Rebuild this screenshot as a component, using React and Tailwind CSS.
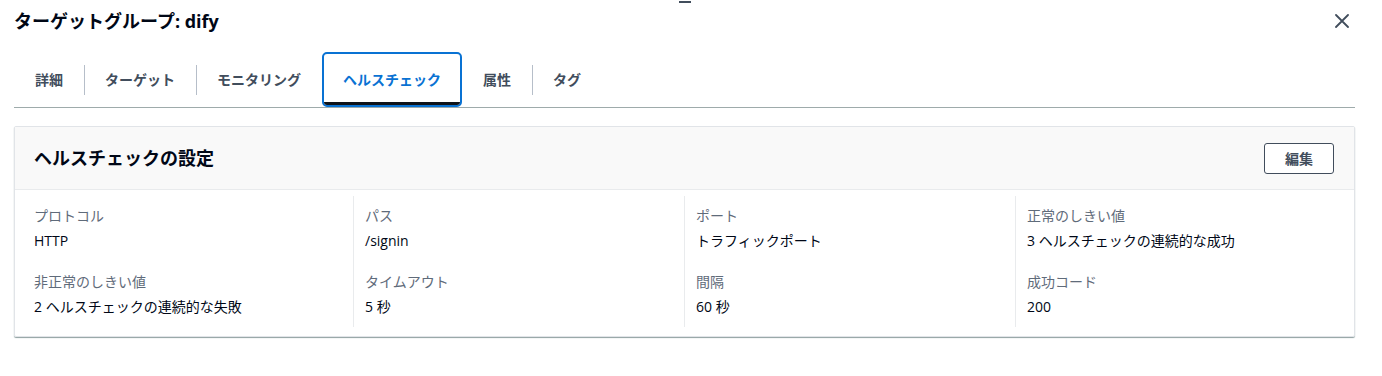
import React from "react";

const tabs = ["詳細", "ターゲット", "モニタリング", "ヘルスチェック", "属性", "タグ"];
const activeTab = 3;

const rows = [
  [
    { label: "プロトコル", value: "HTTP" },
    { label: "非正常のしきい値", value: "2 ヘルスチェックの連続的な失敗" },
  ],
  [
    { label: "パス", value: "/signin" },
    { label: "タイムアウト", value: "5 秒" },
  ],
  [
    { label: "ポート", value: "トラフィックポート" },
    { label: "間隔", value: "60 秒" },
  ],
  [
    { label: "正常のしきい値", value: "3 ヘルスチェックの連続的な成功" },
    { label: "成功コード", value: "200" },
  ],
];

const TabBar = () => (
  <div className="mt-[10px] flex h-[56px] border-b border-[#9eabab]">
    {tabs.map((tab, i) => {
      const active = i === activeTab;
      const showSep = i > 0 && i !== activeTab && i - 1 !== activeTab;
      return (
        <div key={tab} className="relative flex h-[55px] items-center px-[21px]">
          {showSep && (
            <span className="absolute left-0 top-[13px] h-[30px] w-px bg-[#b6bec9]" />
          )}
          {active && (
            <span className="absolute inset-0 overflow-hidden rounded-[5px] border-2 border-[#0972d3]">
              <span className="absolute bottom-0 left-0 right-0 h-[3px] bg-[#0f141a]" />
            </span>
          )}
          <span
            className={
              "relative text-[14px] font-bold leading-[20px] " +
              (active ? "text-[#0972d3]" : "text-[#414d5c]")
            }
          >
            {tab}
          </span>
        </div>
      );
    })}
  </div>
);

const Field = ({ label, value, className = "" }) => (
  <div className={className}>
    <div className="text-[14px] leading-[22px] text-[#5f6b7a]">{label}</div>
    <div className="mt-[3px] text-[14px] leading-[22px] text-[#000716]">{value}</div>
  </div>
);

export default function App() {
  return (
    <div className="relative h-[376px] w-[1382px] bg-white pl-[14px] pr-[27px] font-['Open_Sans','Noto_Sans_CJK_JP',sans-serif]">
      {/* stray cursor mark */}
      <span className="absolute left-[679px] top-[1px] h-[2px] w-[12px] bg-[#414d5c]" />

      {/* Header */}
      <div className="flex h-[42px] items-center justify-between">
        <h1 className="text-[18px] font-bold leading-[24px] text-[#000716]">
          ターゲットグループ: dify
        </h1>
        <button className="mr-[6px] text-[#414d5c]">
          <svg width="14" height="14" viewBox="0 0 14 14" fill="none">
            <path d="M1 1L13 13M13 1L1 13" stroke="currentColor" strokeWidth="1.8" strokeLinecap="round" />
          </svg>
        </button>
      </div>

      <TabBar />

      {/* Card */}
      <div className="mt-[18px] rounded-[2px] border border-[#e1e4e8] shadow-[0_1px_1px_#8fa0a0]">
        <div className="flex h-[63px] items-center justify-between border-b border-[#e9ebed] bg-[#f9f9f9] pl-[19px] pr-[20px]">
          <h2 className="text-[18px] font-bold leading-[24px] text-[#000716]">
            ヘルスチェックの設定
          </h2>
          <button className="flex h-[31px] w-[70px] items-center justify-center rounded-[3px] border border-[#414d5c] bg-white text-[14px] font-bold text-[#414d5c]">
            編集
          </button>
        </div>
        <div className="grid grid-cols-4 pb-[9px] pl-[7px] pr-[8px] pt-[6px]">
          {rows.map((col, i) => (
            <div
              key={i}
              className={
                "border-l pb-[9px] pl-[11px] pt-[9px] " +
                (i === 0 ? "border-transparent" : "border-[#e9ebed]")
              }
            >
              <Field {...col[0]} />
              <Field {...col[1]} className="mt-[19px]" />
            </div>
          ))}
        </div>
      </div>
    </div>
  );
}
